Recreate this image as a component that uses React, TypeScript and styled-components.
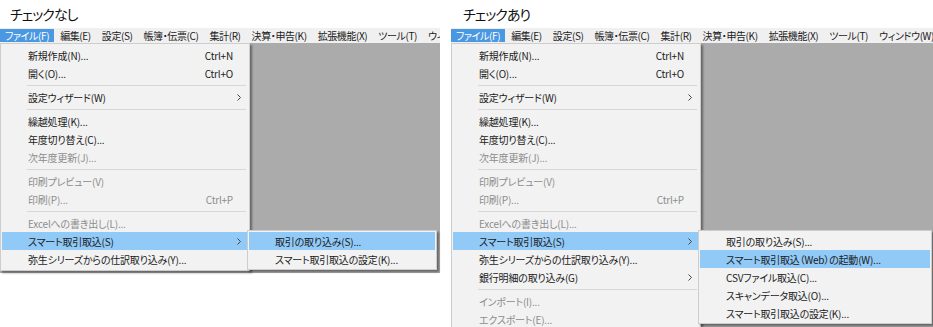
import React from "react";
import styled, { createGlobalStyle } from "styled-components";

type Entry =
  | {
      kind: "item";
      label: string;
      shortcut?: string;
      disabled?: boolean;
      arrow?: boolean;
      active?: boolean;
      sub?: { width: number; items: { label: string; active?: boolean }[] };
    }
  | { kind: "sep" };

const bar = [
  "ファイル(F)",
  "編集(E)",
  "設定(S)",
  "帳簿・伝票(C)",
  "集計(R)",
  "決算・申告(K)",
  "拡張機能(X)",
  "ツール(T)",
  "ウィンドウ(W)",
];

const head: Entry[] = [
  { kind: "item", label: "新規作成(N)...", shortcut: "Ctrl+N" },
  { kind: "item", label: "開く(O)...", shortcut: "Ctrl+O" },
  { kind: "sep" },
  { kind: "item", label: "設定ウィザード(W)", arrow: true },
  { kind: "sep" },
  { kind: "item", label: "繰越処理(K)..." },
  { kind: "item", label: "年度切り替え(C)..." },
  { kind: "item", label: "次年度更新(J)...", disabled: true },
  { kind: "sep" },
  { kind: "item", label: "印刷プレビュー(V)", disabled: true },
  { kind: "item", label: "印刷(P)...", shortcut: "Ctrl+P", disabled: true },
  { kind: "sep" },
  { kind: "item", label: "Excelへの書き出し(L)...", disabled: true },
];

const leftMenu: Entry[] = [
  ...head,
  {
    kind: "item",
    label: "スマート取引取込(S)",
    arrow: true,
    active: true,
    sub: {
      width: 190,
      items: [
        { label: "取引の取り込み(S)...", active: true },
        { label: "スマート取引取込の設定(K)..." },
      ],
    },
  },
  { kind: "item", label: "弥生シリーズからの仕訳取り込み(Y)..." },
];

const rightMenu: Entry[] = [
  ...head,
  {
    kind: "item",
    label: "スマート取引取込(S)",
    arrow: true,
    active: true,
    sub: {
      width: 234,
      items: [
        { label: "取引の取り込み(S)..." },
        { label: "スマート取引取込（Web）の起動(W)...", active: true },
        { label: "CSVファイル取込(C)..." },
        { label: "スキャンデータ取込(O)..." },
        { label: "スマート取引取込の設定(K)..." },
      ],
    },
  },
  { kind: "item", label: "弥生シリーズからの仕訳取り込み(Y)..." },
  { kind: "item", label: "銀行明細の取り込み(G)", arrow: true },
  { kind: "sep" },
  { kind: "item", label: "インポート(I)...", disabled: true },
  { kind: "item", label: "エクスポート(E)...", disabled: true },
];

const GlobalStyle = createGlobalStyle`
  html, body {
    margin: 0;
    padding: 0;
    background: #fff;
  }
  body {
    font-family: "Noto Sans CJK JP", "Noto Sans", sans-serif;
    font-feature-settings: "palt";
  }
`;

const Page = styled.div`
  display: flex;
  gap: 11px;
  width: 933px;
  height: 327px;
  overflow: hidden;
  background: #fff;
`;

const Panel = styled.section<{ $width: number }>`
  flex: none;
  width: ${(p) => p.$width}px;
  display: flex;
  flex-direction: column;
`;

const Title = styled.h2<{ $indent: number }>`
  margin: 0;
  height: 28px;
  box-sizing: border-box;
  padding: 4px 0 0 ${(p) => p.$indent}px;
  font-size: 14px;
  line-height: 20px;
  letter-spacing: -1px;
  font-weight: 400;
  color: #111;
`;

const MenuBar = styled.div`
  display: flex;
  align-items: center;
  height: 15px;
  background: #f0f0f0;
  white-space: nowrap;
  overflow: hidden;
`;

const BarItem = styled.span<{ $open?: boolean }>`
  flex: none;
  height: 13px;
  margin-right: 1px;
  padding: 0 5px;
  font-size: 10px;
  line-height: 13px;
  letter-spacing: -0.4px;
  color: ${(p) => (p.$open ? "#fff" : "#1b1b1b")};
  background: ${(p) => (p.$open ? "#4a97e2" : "transparent")};
`;

const Client = styled.div<{ $height: number }>`
  position: relative;
  height: ${(p) => p.$height}px;
  background: #ababab;
`;

const Dropdown = styled.div`
  position: absolute;
  top: 0;
  left: 0;
  width: 250px;
  box-sizing: border-box;
  padding: 2px 1px;
  background: #f2f2f2;
  border: 1px solid #cdcdcd;
  box-shadow: 2px 2px 2px rgba(0, 0, 0, 0.4);
`;

const SubMenu = styled.div<{ $width: number }>`
  position: absolute;
  top: -2px;
  left: calc(100% - 1px);
  width: ${(p) => p.$width}px;
  box-sizing: border-box;
  padding: 1px;
  background: #f2f2f2;
  border: 1px solid #cdcdcd;
  box-shadow: 2px 2px 2px rgba(0, 0, 0, 0.4);
  z-index: 2;
`;

const Item = styled.div<{ $active?: boolean; $disabled?: boolean }>`
  position: relative;
  display: flex;
  align-items: center;
  height: 18px;
  padding-left: 26px;
  font-size: 10px;
  letter-spacing: -0.2px;
  white-space: nowrap;
  color: ${(p) => (p.$disabled ? "#8d8d8d" : "#1b1b1b")};
  background: ${(p) => (p.$active ? "#91c9f7" : "transparent")};
`;

const Label = styled.span`
  flex: 1;
`;

const Shortcut = styled.span`
  flex: none;
`;

const Gutter = styled.span`
  flex: none;
  width: 15px;
  box-sizing: border-box;
  padding-left: 4px;
  display: flex;
  align-items: center;
`;

const Separator = styled.div`
  height: 6px;
  margin: 0 2px 0 25px;
  display: flex;
  align-items: center;

  &::after {
    content: "";
    flex: 1;
    height: 1px;
    background: #d7d7d7;
  }
`;

const Chevron: React.FC = () => (
  <svg width="4" height="7" viewBox="0 0 4 7">
    <polyline points="0.5,0.5 3.5,3.5 0.5,6.5" fill="none" stroke="#444" strokeWidth="1" />
  </svg>
);

const Menu: React.FC<{ entries: Entry[] }> = ({ entries }) => (
  <Dropdown>
    {entries.map((e, i) =>
      e.kind === "sep" ? (
        <Separator key={i} />
      ) : (
        <Item key={i} $active={e.active} $disabled={e.disabled}>
          <Label>{e.label}</Label>
          {e.shortcut && <Shortcut>{e.shortcut}</Shortcut>}
          <Gutter>{e.arrow && <Chevron />}</Gutter>
          {e.sub && (
            <SubMenu $width={e.sub.width}>
              {e.sub.items.map((s) => (
                <Item key={s.label} $active={s.active}>
                  <Label>{s.label}</Label>
                </Item>
              ))}
            </SubMenu>
          )}
        </Item>
      )
    )}
  </Dropdown>
);

const Screen: React.FC<{ title: string; width: number; height: number; indent: number; entries: Entry[] }> = ({
  title,
  width,
  height,
  indent,
  entries,
}) => (
  <Panel $width={width}>
    <Title $indent={indent}>{title}</Title>
    <MenuBar>
      {bar.map((b, i) => (
        <BarItem key={b} $open={i === 0}>
          {b}
        </BarItem>
      ))}
    </MenuBar>
    <Client $height={height}>
      <Menu entries={entries} />
    </Client>
  </Panel>
);

const App: React.FC = () => (
  <>
    <GlobalStyle />
    <Page>
      <Screen title="チェックなし" width={440} height={230} indent={10} entries={leftMenu} />
      <Screen title="チェックあり" width={482} height={284} indent={12} entries={rightMenu} />
    </Page>
  </>
);

export default App;
